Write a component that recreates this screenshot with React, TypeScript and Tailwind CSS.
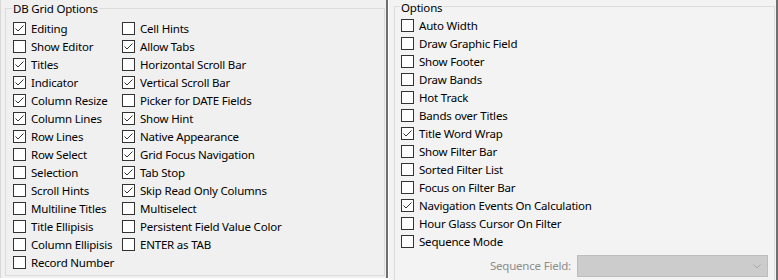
import React from "react";

const leftCol1 = [
  ["Editing", true],
  ["Show Editor", false],
  ["Titles", true],
  ["Indicator", true],
  ["Column Resize", true],
  ["Column Lines", true],
  ["Row Lines", true],
  ["Row Select", false],
  ["Selection", false],
  ["Scroll Hints", false],
  ["Multiline Titles", false],
  ["Title Ellipisis", false],
  ["Column Ellipisis", false],
  ["Record Number", false],
] as const;

const leftCol2 = [
  ["Cell Hints", false],
  ["Allow Tabs", true],
  ["Horizontal Scroll Bar", false],
  ["Vertical Scroll Bar", true],
  ["Picker for DATE Fields", false],
  ["Show Hint", true],
  ["Native Appearance", true],
  ["Grid Focus Navigation", true],
  ["Tab Stop", true],
  ["Skip Read Only Columns", true],
  ["Multiselect", false],
  ["Persistent Field Value Color", false],
  ["ENTER as TAB", false],
] as const;

const rightCol = [
  ["Auto Width", false],
  ["Draw Graphic Field", false],
  ["Show Footer", false],
  ["Draw Bands", false],
  ["Hot Track", false],
  ["Bands over Titles", false],
  ["Title Word Wrap", true],
  ["Show Filter Bar", false],
  ["Sorted Filter List", false],
  ["Focus on Filter Bar", false],
  ["Navigation Events On Calculation", true],
  ["Hour Glass Cursor On Filter", false],
  ["Sequence Mode", false],
] as const;

function CheckRow({ label, checked }: { label: string; checked: boolean }) {
  return (
    <div className="flex h-[18px] items-start">
      <span className="mt-[2px] flex h-[13px] w-[13px] shrink-0 items-center justify-center border border-[#333333] bg-white">
        {checked && (
          <svg width="11" height="11" viewBox="0 0 11 11">
            <path d="M1.5 5.5 L4 8 L9.5 2.5" fill="none" stroke="#333333" strokeWidth="1" />
          </svg>
        )}
      </span>
      <span className="ml-[5px] whitespace-nowrap leading-[18px]">{label}</span>
    </div>
  );
}

export default function App() {
  return (
    <div
      className="flex h-[280px] w-[778px] overflow-hidden bg-white text-[11.5px] tracking-[-0.2px] text-black"
      style={{ fontFamily: '"Noto Sans", "Liberation Sans", sans-serif' }}
    >
      {/* DB Grid Options */}
      <div className="h-[278px] w-[388px] border-l border-r-2 border-l-[#d8d8d8] border-r-[#6f6f6f] bg-[#f0f0f0]">
        <div className="ml-[4px] mt-[8px] h-[268px] w-[380px] border border-[#dcdcdc]">
          <div className="-mt-[8px] ml-[6px] w-fit bg-[#f0f0f0] px-[1px] leading-[16px]">
            DB Grid Options
          </div>
          <div className="mt-[3px] flex pl-[7px]">
            <div className="w-[109px]">
              {leftCol1.map(([l, c]) => (
                <CheckRow key={l} label={l} checked={c} />
              ))}
            </div>
            <div>
              {leftCol2.map(([l, c]) => (
                <CheckRow key={l} label={l} checked={c} />
              ))}
            </div>
          </div>
        </div>
      </div>

      {/* Options */}
      <div className="ml-[1px] h-[280px] flex-1 overflow-hidden border-r-2 border-[#6f6f6f] bg-[#f3f3f3] pl-[5px] pr-[1px]">
        <div className="mt-[6px] h-[290px] border border-[#dcdcdc]">
          <div className="-mt-[7px] ml-[5px] w-fit bg-[#f3f3f3] px-[1px] leading-[16px]">
            Options
          </div>
          <div className="mt-[1px] pl-[6px]">
            {rightCol.map(([l, c]) => (
              <CheckRow key={l} label={l} checked={c} />
            ))}
            <div className="mt-[4px] flex items-center justify-end pr-[6px]">
              <span className="mr-[6px] text-[#8d8d8d]">Sequence Field:</span>
              <div className="flex h-[22px] w-[191px] items-center justify-end border border-[#bdbdbd] bg-[#cccccc] pr-[6px]">
                <svg width="8" height="5" viewBox="0 0 8 5">
                  <path d="M0.5 0.5 L4 4 L7.5 0.5" fill="none" stroke="#a8a8a8" strokeWidth="1" />
                </svg>
              </div>
            </div>
          </div>
        </div>
      </div>
    </div>
  );
}
